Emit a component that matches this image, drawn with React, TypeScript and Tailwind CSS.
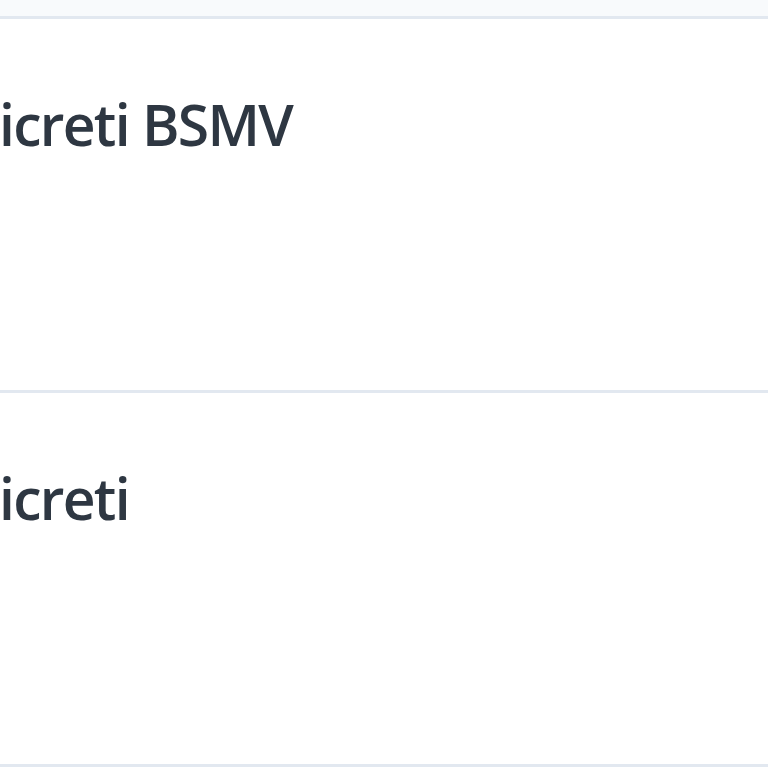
export default function App() {
  return (
    <div className="w-[768px] h-[768px] overflow-hidden bg-white" style={{ fontFamily: '"Open Sans", "Noto Sans", sans-serif' }}>
      <div className="h-[16px] bg-[#f8fafc]" />
      <div className="border-t-[3px] border-[#e2e8f0]">
        <div className="h-[374px] pt-[70px] border-b-[3px] border-[#e2e8f0]">
          <div className="text-[57px] font-semibold leading-[70px] text-[#2e3742] tracking-[-1.7px] -ml-[1px] whitespace-nowrap">icreti BSMV</div>
        </div>
        <div className="h-[374px] pt-[70px] border-b-[3px] border-[#e2e8f0]">
          <div className="text-[57px] font-semibold leading-[70px] text-[#2e3742] tracking-[-1.7px] -ml-[1px] whitespace-nowrap">icreti</div>
        </div>
      </div>
    </div>
  );
}
